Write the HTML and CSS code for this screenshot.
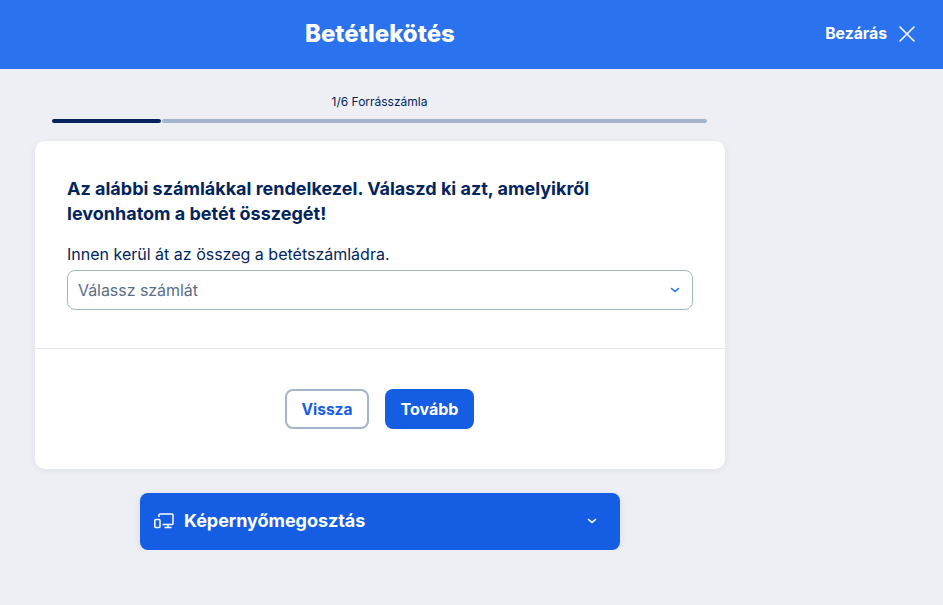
FILE: index.html
```html
<!DOCTYPE html>
<html lang="hu">
<head>
<meta charset="UTF-8" />
<meta name="viewport" content="width=device-width, initial-scale=1" />
<title>Betétlekötés</title>
<link rel="stylesheet" href="styles.css">
</head>
<body>

<header class="topbar">
  <div class="topbar-title">Betétlekötés</div>
  <button class="close-btn">
    <span>Bezárás</span>
    <svg width="16" height="16" viewBox="0 0 16 16" fill="none" stroke="#fff" stroke-width="1.5" stroke-linecap="round"><path d="M1 1l14 14M15 1L1 15"/></svg>
  </button>
</header>

<main class="content">
  <div class="progress">
    <div class="progress-label">1/6 Forrásszámla</div>
    <div class="progress-track">
      <div class="progress-done"></div>
      <div class="progress-rest"></div>
    </div>
  </div>

  <section class="card">
    <div class="card-body">
      <h2>Az alábbi számlákkal rendelkezel. Válaszd ki azt, amelyikről levonhatom a betét összegét!</h2>
      <label class="field-label">Innen kerül át az összeg a betétszámládra.</label>
      <div class="select">
        <span>Válassz számlát</span>
        <svg width="10" height="6" viewBox="0 0 10 6" fill="none" stroke="#2b6fee" stroke-width="1.6" stroke-linecap="round" stroke-linejoin="round"><path d="M1.5 1.5L5 4.5l3.5-3"/></svg>
      </div>
    </div>
    <div class="card-actions">
      <button class="btn btn-outline">Vissza</button>
      <button class="btn btn-primary">Tovább</button>
    </div>
  </section>

  <div class="share">
    <div class="share-left">
      <svg width="20" height="16" viewBox="0 0 20 16" fill="none" stroke="#fff" stroke-width="1.5" stroke-linejoin="round"><path d="M5 4V2a1 1 0 0 1 1-1h12a1 1 0 0 1 1 1v8.5a1 1 0 0 1-1 1H8.5"/><path d="M10.5 14.5h7M14 11.5v3"/><rect x="0.8" y="6.5" width="5.2" height="8" rx="1"/></svg>
      <span>Képernyőmegosztás</span>
    </div>
    <svg width="10" height="6" viewBox="0 0 10 6" fill="none" stroke="#fff" stroke-width="1.6" stroke-linecap="round" stroke-linejoin="round"><path d="M1.5 1.5L5 4.5l3.5-3"/></svg>
  </div>
</main>

</body>
</html>
```

FILE: styles.css
```css
* {
  box-sizing: border-box;
}
body {
  margin: 0;
  background: #eeeff4;
  font-family: Inter, "Liberation Sans", sans-serif;
  color: #03255c;
}
button {
  font-family: inherit;
}

.topbar {
  height: 69px;
  background: #2b72ee;
  display: flex;
  align-items: center;
  padding: 0 28px 2px 305px;
  justify-content: space-between;
  color: #fff;
}
.topbar-title {
  font-size: 24px;
  font-weight: 800;
}
.close-btn {
  display: flex;
  align-items: center;
  gap: 12px;
  border: none;
  background: none;
  padding: 0;
  color: #fff;
  font-size: 15.75px;
  font-weight: 700;
}

.content {
  width: 690px;
  margin-left: 35px;
}

.progress {
  padding: 25px 18px 0 17px;
}
.progress-label {
  text-align: center;
  font-size: 12px;
  line-height: 15px;
}
.progress-track {
  display: flex;
  gap: 1px;
  margin-top: 10px;
}
.progress-done {
  width: 109px;
  height: 4px;
  border-radius: 2px;
  background: #03255c;
}
.progress-rest {
  flex: 1;
  height: 4px;
  border-radius: 2px;
  background: #a3b5ca;
}

.card {
  margin-top: 18px;
  height: 328px;
  background: #fff;
  border-radius: 10px;
  box-shadow: 0 2px 8px rgba(3, 37, 92, 0.06);
}
.card-body {
  height: 208px;
  padding: 35px 32px 0;
  border-bottom: 1px solid #e3e6eb;
}
.card-body h2 {
  margin: 0;
  max-width: 560px;
  font-size: 18px;
  line-height: 25px;
  font-weight: 700;
}
.field-label {
  display: block;
  margin-top: 18px;
  font-size: 16px;
  line-height: 20px;
}
.select {
  margin-top: 6px;
  height: 40px;
  border: 1px solid #a3b5ca;
  border-radius: 8px;
  display: flex;
  align-items: center;
  justify-content: space-between;
  padding: 0 12px 0 10px;
  font-size: 16px;
  letter-spacing: -0.05px;
  color: #5b6e85;
}

.card-actions {
  display: flex;
  justify-content: center;
  gap: 16px;
  padding: 40px 1px 0 0;
}
.btn {
  height: 40px;
  border-radius: 8px;
  font-size: 16px;
  font-weight: 700;
}
.btn-outline {
  width: 84px;
  background: #fff;
  border: 2px solid #a3b5ca;
  color: #155ee3;
  font-size: 15.5px;
}
.btn-primary {
  width: 89px;
  background: #155ee3;
  border: none;
  color: #fff;
}

.share {
  width: 480px;
  height: 57px;
  margin: 24px 0 0 105px;
  background: #155ee3;
  border-radius: 8px;
  display: flex;
  align-items: center;
  justify-content: space-between;
  padding: 0 23px 2px 14px;
  color: #fff;
  box-shadow: 0 2px 8px rgba(3, 37, 92, 0.08);
}
.share-left {
  display: flex;
  align-items: center;
  gap: 10px;
  font-size: 18px;
  letter-spacing: -0.05px;
  font-weight: 700;
}
```
